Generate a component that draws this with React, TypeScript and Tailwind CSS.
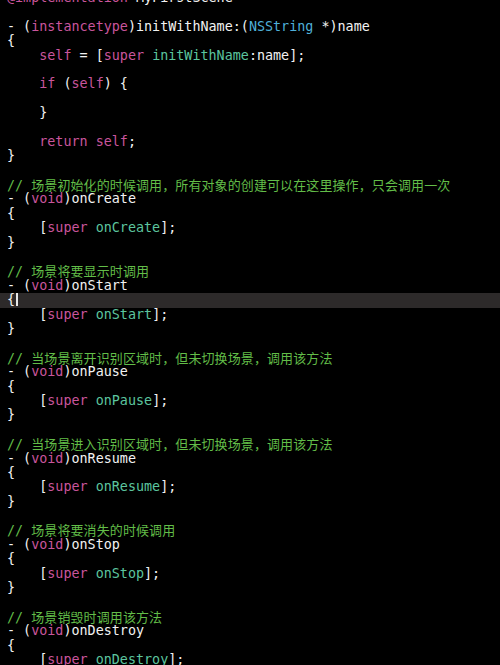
const K = "text-[#c9559c]"; // keyword
const M = "text-[#5cc59f]"; // method
const C = "text-[#62bd48]"; // comment
const T = "text-[#4fb0d9]"; // type
const P = "text-[#f2f2f2]"; // plain

type Tok = [string, string];

function method(name: string): Tok[][] {
  return [
    [[P, "- ("], [K, "void"], [P, ")" + name]],
    [[P, "{"]],
    [[P, "    ["], [K, "super"], [P, " "], [M, name], [P, "];"]],
    [[P, "}"]],
  ];
}

const blocks: { comment: string; name: string }[] = [
  { comment: "场景初始化的时候调用，所有对象的创建可以在这里操作，只会调用一次", name: "onCreate" },
  { comment: "场景将要显示时调用", name: "onStart" },
  { comment: "当场景离开识别区域时，但未切换场景，调用该方法", name: "onPause" },
  { comment: "当场景进入识别区域时，但未切换场景，调用该方法", name: "onResume" },
  { comment: "场景将要消失的时候调用", name: "onStop" },
  { comment: "场景销毁时调用该方法", name: "onDestroy" },
];

const lines: Tok[][] = [
  [[K, "@implementation"], [P, " MyFirstScene"]],
  [],
  [[P, "- ("], [K, "instancetype"], [P, ")initWithName:("], [T, "NSString"], [P, " *)name"]],
  [[P, "{"]],
  [[P, "    "], [K, "self"], [P, " = ["], [K, "super"], [P, " "], [M, "initWithName"], [P, ":name];"]],
  [],
  [[P, "    "], [K, "if"], [P, " ("], [K, "self"], [P, ") {"]],
  [],
  [[P, "    }"]],
  [],
  [[P, "    "], [K, "return"], [P, " "], [K, "self"], [P, ";"]],
  [[P, "}"]],
];

blocks.forEach((b) => {
  lines.push([]);
  lines.push([[C, "// "], [C + " cjk", b.comment]]);
  lines.push(...method(b.name));
});

// "{" line of onStart, where the caret sits
const ACTIVE = 21;

export default function App() {
  return (
    <div className="w-[500px] h-[665px] overflow-hidden bg-black">
      <div
        className="mt-[-9px] text-[13.4px] leading-[14.4px] whitespace-pre"
        style={{ fontFamily: '"DejaVu Sans Mono", "Liberation Mono", "Noto Sans CJK SC", monospace' }}
      >
        {lines.map((line, i) => (
          <div key={i} className={`h-[14.4px] pl-[7px] ${i === ACTIVE ? "bg-[#2d2a2a]" : ""}`}>
            {line.map(([cls, text], j) =>
              cls.endsWith(" cjk") ? (
                <span
                  key={j}
                  className={`${cls.replace(" cjk", "")} text-[13px] leading-[14.4px] tracking-[0.1px]`}
                  style={{ fontFamily: '"Noto Sans CJK SC", sans-serif' }}
                >
                  {text}
                </span>
              ) : (
                <span key={j} className={cls}>
                  {text}
                </span>
              )
            )}
            {i === ACTIVE && (
              <span className="inline-block w-[1.5px] h-[13px] bg-[#e8e8e8] align-[-2px] ml-[1px]" />
            )}
            {line.length === 0 && " "}
          </div>
        ))}
      </div>
    </div>
  );
}
